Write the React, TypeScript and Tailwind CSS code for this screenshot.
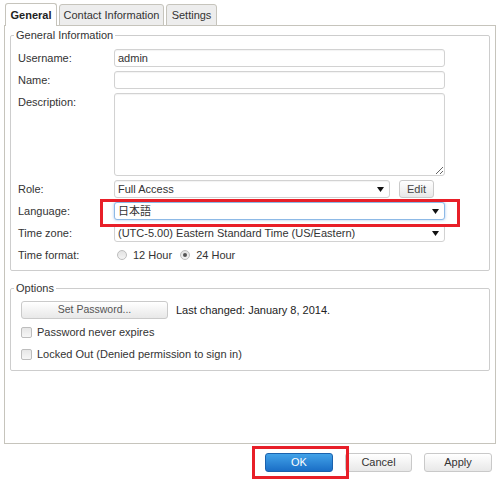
import React from 'react';

const Arrow = () => (
  <svg width="7" height="5" viewBox="0 0 7 5" className="shrink-0">
    <path d="M0 0h7L3.5 5z" fill="#111" />
  </svg>
);

function Select({ value, className = '', focused = false }: { value: string; className?: string; focused?: boolean }) {
  return (
    <div
      className={`h-[18px] flex items-center justify-between pl-[3px] pr-[5px] bg-white rounded-[3px] border ${
        focused
          ? 'border-[#8db9e6] shadow-[0_0_3px_rgba(90,150,220,0.55)]'
          : 'border-[#d2d2d2] shadow-[inset_0_1px_1px_rgba(0,0,0,0.05)]'
      } ${className}`}
    >
      <span className="truncate">{value}</span>
      <Arrow />
    </div>
  );
}

function TextInput({ value = '' }: { value?: string }) {
  return (
    <div className="h-[18px] w-[331px] flex items-center pl-[3px] bg-white rounded-[3px] border border-[#d2d2d2] shadow-[inset_0_1px_1px_rgba(0,0,0,0.05)]">
      {value}
    </div>
  );
}

function Radio({ checked }: { checked?: boolean }) {
  return (
    <span className="w-[10px] h-[10px] rounded-full border border-[#bdbdbd] bg-gradient-to-b from-[#e2e2e2] to-[#f4f4f4] flex items-center justify-center shrink-0">
      {checked && <span className="w-[4px] h-[4px] rounded-full bg-[#555]" />}
    </span>
  );
}

function Checkbox() {
  return (
    <span className="w-[11px] h-[11px] rounded-[2px] border border-[#bdbdbd] bg-gradient-to-b from-[#e6e6e6] to-[#f6f6f6] shrink-0" />
  );
}

const Label = ({ children }: { children: React.ReactNode }) => (
  <div className="leading-[18px] pl-[7px]">{children}</div>
);

export default function App() {
  return (
    <div className="w-[500px] h-[480px] bg-white relative overflow-hidden text-[11px] text-[#333] font-['Liberation_Sans','Noto_Sans_CJK_JP',Arial,sans-serif]">
      <div className="pt-[3px] px-[4px]">
        {/* tabs */}
        <div className="flex items-end gap-[2px] pl-[1px] relative z-10 h-[23px]">
          <div className="h-[23px] w-[52px] flex items-center justify-center bg-white border border-b-0 border-[#c6c4bc] rounded-t-[3px] font-bold text-[#222]">
            General
          </div>
          <div className="h-[22px] w-[105px] flex items-center justify-center bg-[#ededed] border border-[#c6c4bc] rounded-t-[3px] text-[#333]">
            Contact Information
          </div>
          <div className="h-[22px] w-[51px] flex items-center justify-center bg-[#ededed] border border-[#c6c4bc] rounded-t-[3px] text-[#333]">
            Settings
          </div>
        </div>

        {/* panel */}
        <div className="h-[419px] -mt-px border border-[#c6c4bc] px-[5px]">
          <fieldset className="mt-[3px] border border-[#cdcdcd] rounded-[2px]">
            <legend className="ml-[3px] px-[2px] leading-[13px]">General Information</legend>
            <div className="grid grid-cols-[103px_331px] gap-y-[4px] pt-[7px] pb-[6px]">
              <Label>Username:</Label>
              <TextInput value="admin" />

              <Label>Name:</Label>
              <TextInput />

              <Label>Description:</Label>
              <textarea
                readOnly
                className="h-[83px] w-[331px] bg-white rounded-[3px] border border-[#d2d2d2] shadow-[inset_0_1px_1px_rgba(0,0,0,0.05)] outline-none"
              />

              <Label>Role:</Label>
              <div className="flex items-center">
                <Select value="Full Access" className="w-[276px]" />
                <div className="ml-[9px] w-[35px] h-[18px] flex items-center justify-center rounded-[3px] border border-[#cacaca] bg-gradient-to-b from-white to-[#e8e8e8] text-[#444]">
                  Edit
                </div>
              </div>

              <Label>Language:</Label>
              <Select value="日本語" className="w-[331px]" focused />

              <Label>Time zone:</Label>
              <Select value="(UTC-5.00) Eastern Standard Time (US/Eastern)" className="w-[331px]" />

              <Label>Time format:</Label>
              <div className="h-[18px] flex items-center pl-[3px]">
                <Radio />
                <span className="ml-[6px]">12 Hour</span>
                <span className="ml-[8px]" />
                <Radio checked />
                <span className="ml-[6px]">24 Hour</span>
              </div>
            </div>
          </fieldset>

          <fieldset className="mt-[11px] border border-[#cdcdcd] rounded-[2px]">
            <legend className="ml-[3px] px-[2px] leading-[13px]">Options</legend>
            <div className="pl-[10px] pt-[6px] pb-[7px] flex flex-col gap-[4px]">
              <div className="flex items-center h-[18px]">
                <div className="w-[147px] h-[18px] flex items-center justify-center rounded-[3px] border border-[#cacaca] bg-gradient-to-b from-white to-[#e8e8e8] text-[#555] text-[10.5px]">
                  Set Password...
                </div>
                <span className="ml-[8px] text-[#222]">Last changed: January 8, 2014.</span>
              </div>
              <div className="flex items-center h-[18px] pl-[-1px]">
                <Checkbox />
                <span className="ml-[5px]">Password never expires</span>
              </div>
              <div className="flex items-center h-[18px]">
                <Checkbox />
                <span className="ml-[5px]">Locked Out (Denied permission to sign in)</span>
              </div>
            </div>
          </fieldset>
        </div>
      </div>

      {/* footer buttons */}
      <div className="flex justify-end gap-[12px] pr-[8px] mt-[9px]">
        <div className="w-[68px] h-[19px] flex items-center justify-center rounded-[3px] border border-[#1b62ad] bg-gradient-to-b from-[#42a2e8] to-[#1a6ec6] text-white">
          OK
        </div>
        <div className="w-[67px] h-[19px] flex items-center justify-center rounded-[3px] border border-[#c9c9c9] bg-gradient-to-b from-white to-[#e8e8e8] text-[#333]">
          Cancel
        </div>
        <div className="w-[68px] h-[19px] flex items-center justify-center rounded-[3px] border border-[#c9c9c9] bg-gradient-to-b from-white to-[#e8e8e8] text-[#333]">
          Apply
        </div>
      </div>

      {/* annotation frames */}
      <div className="absolute left-[100px] top-[199px] w-[360px] h-[28px] border-[3px] border-[#e81f28] pointer-events-none" />
      <div className="absolute left-[252px] top-[446px] w-[97px] h-[33px] border-[3px] border-[#e81f28] pointer-events-none" />
    </div>
  );
}
